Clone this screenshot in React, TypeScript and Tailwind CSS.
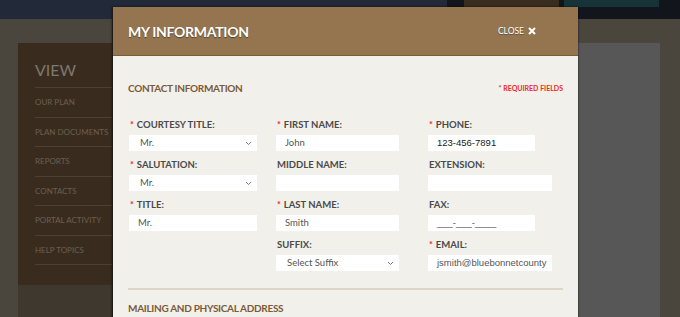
import type { ReactNode } from "react";

const lato = "font-['Lato','Open_Sans',sans-serif]";
const arial = "font-['Liberation_Sans',Arial,sans-serif]";

const navItems = ["Our Plan", "Plan Documents", "Reports", "Contacts", "Portal Activity", "Help Topics"];

function Chevron() {
  return (
    <svg width="7" height="5" viewBox="0 0 7 5" fill="none" className="shrink-0">
      <path d="M1 1l2.5 2.5L6 1" stroke="#777" strokeWidth="1" />
    </svg>
  );
}

function Field({
  label,
  required,
  children,
}: {
  label: string;
  required?: boolean;
  children: ReactNode;
}) {
  return (
    <div className="flex flex-col">
      <div className={`flex items-center h-[14px] pl-[1px] text-[9.5px] font-bold text-[#4a4a4a] ${lato}`}>
        {required && <span className="text-[#e8242c] mr-[3px] text-[9px]">*</span>}
        {label}
      </div>
      <div className="mt-[3px]">{children}</div>
    </div>
  );
}

function Box({ width, children, select }: { width: string; children?: ReactNode; select?: boolean }) {
  return (
    <div
      className={`${width} h-[16px] bg-white flex items-center justify-between overflow-hidden whitespace-nowrap ${
        select ? "pl-[11px] pr-[5px]" : "pl-[9px] pr-0"
      }`}
    >
      {children}
      {select && <Chevron />}
    </div>
  );
}

export default function App() {
  return (
    <div className={`relative w-[680px] h-[317px] overflow-hidden bg-[#4a463e] ${lato}`}>
      {/* top bar behind overlay */}
      <div className="flex h-[19px]">
        <div className="flex-1 bg-[#222938]" />
        <div className="w-[233px] bg-[#12161c] flex items-start">
          <div className="ml-[17px] w-[95px] h-[7px] bg-[#3a2d20]" />
          <div className="ml-[5px] w-[95px] h-[7px] bg-[#163437]" />
        </div>
      </div>

      {/* page body behind overlay */}
      <div className="pt-[24px] pl-[18px] pr-[20px] h-[298px]">
        <div className="flex justify-between h-full bg-[#3e382f]">
          <div className="w-[180px] h-[242px] bg-[#392c1f] pl-[17px] pt-[17px]">
            <div className="text-[16px] leading-[20px] text-[#7d7870] pb-[7px] border-b border-[#4d4134]">VIEW</div>
            {navItems.map((item) => (
              <div
                key={item}
                className="h-[29.5px] flex items-center border-b border-[#4d4134] text-[8px] uppercase text-[#6c5f50]"
              >
                {item}
              </div>
            ))}
          </div>
          <div className="w-[82px] bg-[#575757]" />
        </div>
      </div>

      {/* modal */}
      <div className="absolute left-[112px] top-[7px] w-[466px] h-[330px] shadow-[0_0_2px_rgba(0,0,0,0.7)] border-l border-[#1f1a14]">
        <div className="h-[49px] bg-[#94754f] border-b border-[#7a5c3a] flex items-center justify-between pl-[15px] pr-[42px]">
          <h1 className="text-[14px] font-bold text-white [text-shadow:0_1px_1px_rgba(0,0,0,0.45)] tracking-[-0.3px]">
            MY INFORMATION
          </h1>
          <button className="flex items-center gap-[4px] text-white text-[8.5px] [text-shadow:0_1px_1px_rgba(0,0,0,0.35)]">
            CLOSE
            <svg width="8" height="8" viewBox="0 0 8 8">
              <path d="M1 1l6 6M7 1L1 7" stroke="white" strokeWidth="2" />
            </svg>
          </button>
        </div>

        <div className="bg-[#f2f0ea] h-full px-[15px] pt-[25px]">
          <div className="flex items-center justify-between h-[14px]">
            <h2 className="text-[10px] font-bold text-[#7b5a37] tracking-[-0.3px]">CONTACT INFORMATION</h2>
            <span className="text-[7px] font-bold text-[#ee2a2a]">* REQUIRED FIELDS</span>
          </div>

          <div className="flex mt-[23px] pl-[1px]">
            <div className="w-[147px] flex flex-col gap-[7px]">
              <Field label="COURTESY TITLE:" required>
                <Box width="w-[128px]" select>
                  <span className="text-[9.5px] text-[#555]">Mr.</span>
                </Box>
              </Field>
              <Field label="SALUTATION:" required>
                <Box width="w-[128px]" select>
                  <span className="text-[9.5px] text-[#555]">Mr.</span>
                </Box>
              </Field>
              <Field label="TITLE:" required>
                <Box width="w-[128px]">
                  <span className="text-[9.5px] text-[#555]">Mr.</span>
                </Box>
              </Field>
            </div>

            <div className="w-[152px] flex flex-col gap-[7px]">
              <Field label="FIRST NAME:" required>
                <Box width="w-[123px]">
                  <span className="text-[9.5px] text-[#555]">John</span>
                </Box>
              </Field>
              <Field label="MIDDLE NAME:">
                <Box width="w-[123px]" />
              </Field>
              <Field label="LAST NAME:" required>
                <Box width="w-[123px]">
                  <span className="text-[9.5px] text-[#555]">Smith</span>
                </Box>
              </Field>
              <Field label="SUFFIX:">
                <Box width="w-[123px]" select>
                  <span className="text-[9.5px] text-[#555]">Select Suffix</span>
                </Box>
              </Field>
            </div>

            <div className="flex flex-col gap-[7px]">
              <Field label="PHONE:" required>
                <Box width="w-[107px]">
                  <span className={`text-[9.5px] text-[#222] ${arial}`}>123-456-7891</span>
                </Box>
              </Field>
              <Field label="EXTENSION:">
                <Box width="w-[124px]" />
              </Field>
              <Field label="FAX:">
                <Box width="w-[107px]">
                  <span className={`text-[9.5px] text-[#555] ${arial}`}>___-___-____</span>
                </Box>
              </Field>
              <Field label="EMAIL:" required>
                <Box width="w-[124px]">
                  <span className={`text-[9.5px] text-[#555] ${arial}`}>jsmith@bluebonnetcounty</span>
                </Box>
              </Field>
            </div>
          </div>

          <div className="mt-[17px] h-[2px] bg-[#ddd5c8]" />
          <h2 className="mt-[11px] text-[10px] leading-[14px] font-bold text-[#7b5a37] tracking-[-0.3px]">
            MAILING AND PHYSICAL ADDRESS
          </h2>
        </div>
      </div>
    </div>
  );
}
